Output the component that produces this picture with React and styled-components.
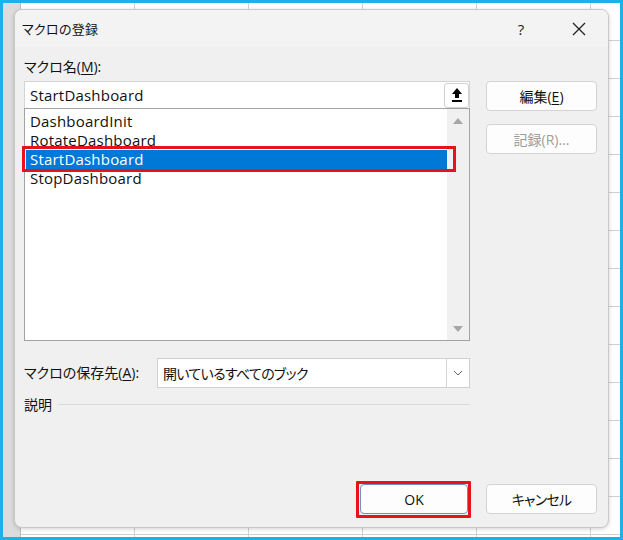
import React from "react";
import styled, { createGlobalStyle } from "styled-components";

const Global = createGlobalStyle`
  html, body { margin: 0; padding: 0; }
  body { width: 623px; height: 540px; overflow: hidden; }
  * { box-sizing: border-box; }
`;

const JP = `"Open Sans", "Noto Sans CJK JP", sans-serif`;

const Frame = styled.div`
  width: 623px;
  height: 540px;
  border: 3px solid #1cb2e6;
  padding: 6px 11px 9px 11px;
  background-color: #ffffff;
  background-image:
    linear-gradient(to right, #dcdcdc 0 17px, #bdbdbd 17px 18px, transparent 18px),
    repeating-linear-gradient(to right, transparent 0 113px, #d2d2d2 113px 114px),
    repeating-linear-gradient(to bottom, transparent 0 37px, #cfcfcf 37px 38px);
  background-position: 0 0, 18px 0, 0 0;
  display: flex;
`;

const Dialog = styled.div`
  flex: 1;
  display: flex;
  flex-direction: column;
  background: #f0f0f0;
  border: 1px solid #c9c9c9;
  border-radius: 8px;
  box-shadow: 0 1px 4px rgba(0, 0, 0, 0.18);
  overflow: hidden;
  font-family: ${JP};
  font-feature-settings: "palt" 1;
  color: #111;
`;

const TitleBar = styled.div`
  height: 37px;
  display: flex;
  align-items: center;
  padding-left: 7px;
  background: #f3f3f3;
  font-size: 13px;
`;

const TitleText = styled.div`
  flex: 1;
  letter-spacing: 0.3px;
`;

const TitleButton = styled.div`
  width: 58px;
  height: 37px;
  display: flex;
  align-items: center;
  justify-content: center;
  font-size: 15px;
  color: #222;
`;

const Body = styled.div`
  flex: 1;
  display: flex;
  flex-direction: column;
  padding: 11px 11px 13px 9px;
`;

const Top = styled.div`
  display: flex;
  gap: 16px;
`;

const LeftCol = styled.div`
  width: 446px;
  display: flex;
  flex-direction: column;
`;

const RightCol = styled.div`
  width: 111px;
  padding-top: 23px;
  display: flex;
  flex-direction: column;
  gap: 13px;
`;

const Label = styled.div`
  font-size: 14px;
  line-height: 18px;
  white-space: nowrap;
  u { text-decoration: underline; text-underline-offset: 2px; }
`;

const NameBox = styled.div`
  margin-top: 5px;
  height: 27px;
  display: flex;
  align-items: center;
  background: #fff;
  border: 1px solid #d4d4d4;
  border-bottom: none;
  padding-left: 5px;
  font-size: 15px;
`;

const NameText = styled.div`
  flex: 1;
  letter-spacing: 0.2px;
`;

const UpButton = styled.div`
  width: 25px;
  height: 25px;
  display: flex;
  align-items: center;
  justify-content: center;
  border: 1px solid #d0d0d0;
  border-radius: 3px;
  background: #fff;
`;

const ListBox = styled.div`
  height: 233px;
  display: flex;
  background: #fff;
  border: 1px solid #a3a3a3;
`;

const Items = styled.div`
  flex: 1;
  padding-top: 3px;
  padding-left: 1px;
`;

const Item = styled.div`
  position: relative;
  height: 19px;
  line-height: 19px;
  padding-left: 4px;
  font-size: 15px;
  letter-spacing: 0.2px;
  background: ${(p) => (p.$selected ? "#0078d7" : "transparent")};
  color: ${(p) => (p.$selected ? "#fff" : "#111")};
`;

const Highlight = styled.div`
  position: absolute;
  left: -4px;
  top: -4px;
  right: -9px;
  bottom: -3px;
  border: 3px solid #e8121a;
  pointer-events: none;
`;

const ScrollBar = styled.div`
  width: 22px;
  background: #f0f0f0;
  display: flex;
  flex-direction: column;
  justify-content: space-between;
  align-items: center;
  padding: 9px 0 8px;
`;

const Arrow = styled.div`
  width: 0;
  height: 0;
  border-left: 5px solid transparent;
  border-right: 5px solid transparent;
  ${(p) =>
    p.$down
      ? "border-top: 6px solid #a6a6a6;"
      : "border-bottom: 6px solid #a6a6a6;"}
`;

const Button = styled.div`
  position: relative;
  height: 30px;
  width: ${(p) => p.$w || 111}px;
  display: flex;
  align-items: center;
  justify-content: center;
  background: #fdfdfd;
  border: 1px solid ${(p) => (p.$default ? "#6f8fc7" : "#d3d3d3")};
  border-radius: 4px;
  font-size: 14px;
  letter-spacing: ${(p) => p.$tight ? "-0.8px" : "0"};
  color: ${(p) => (p.$disabled ? "#9d9d9d" : "#111")};
  u { text-decoration: underline; text-underline-offset: 2px; }
`;

const ButtonMark = styled.div`
  position: absolute;
  left: -5px;
  right: -4px;
  top: -4px;
  bottom: -5px;
  border: 3px solid #e8121a;
  border-radius: 1px;
  pointer-events: none;
`;

const SaveRow = styled.div`
  margin-top: 17px;
  width: 446px;
  display: flex;
  align-items: center;
`;

const SaveLabel = styled(Label)`
  width: 133px;
`;

const Select = styled.div`
  flex: 1;
  height: 30px;
  display: flex;
  align-items: stretch;
  background: #fff;
  border: 1px solid #cfcfcf;
  font-size: 14px;
`;

const SelectText = styled.div`
  flex: 1;
  display: flex;
  align-items: center;
  padding-left: 5px;
  letter-spacing: -0.7px;
`;

const Chevron = styled.div`
  width: 23px;
  border-left: 1px solid #d6d6d6;
  display: flex;
  align-items: center;
  justify-content: center;
`;

const DescRow = styled.div`
  margin-top: 8px;
  width: 446px;
  display: flex;
  align-items: center;
  gap: 6px;
`;

const Rule = styled.div`
  flex: 1;
  height: 1px;
  background: #d9d9d9;
  margin-top: -2px;
`;

const Footer = styled.div`
  margin-top: auto;
  display: flex;
  justify-content: flex-end;
  gap: 18px;
`;

const items = ["DashboardInit", "RotateDashboard", "StartDashboard", "StopDashboard"];

export default function App() {
  return (
    <>
      <Global />
      <Frame>
        <Dialog>
          <TitleBar>
            <TitleText>マクロの登録</TitleText>
            <TitleButton>?</TitleButton>
            <TitleButton>
              <svg width="14" height="14" viewBox="0 0 14 14">
                <path d="M1 1L13 13M13 1L1 13" stroke="#222" strokeWidth="1.3" />
              </svg>
            </TitleButton>
          </TitleBar>
          <Body>
            <Top>
              <LeftCol>
                <Label>
                  マクロ名(<u>M</u>):
                </Label>
                <NameBox>
                  <NameText>StartDashboard</NameText>
                  <UpButton>
                    <svg width="12" height="16" viewBox="0 0 12 16">
                      <path d="M6 1L1 7H4V11H8V7H11Z" fill="#000" />
                      <rect x="1" y="13" width="10" height="2" fill="#000" />
                    </svg>
                  </UpButton>
                </NameBox>
                <ListBox>
                  <Items>
                    {items.map((it) => (
                      <Item key={it} $selected={it === "StartDashboard"}>
                        {it}
                        {it === "StartDashboard" && <Highlight />}
                      </Item>
                    ))}
                  </Items>
                  <ScrollBar>
                    <Arrow />
                    <Arrow $down />
                  </ScrollBar>
                </ListBox>
              </LeftCol>
              <RightCol>
                <Button>
                  編集(<u>E</u>)
                </Button>
                <Button $disabled>記録(R)...</Button>
              </RightCol>
            </Top>
            <SaveRow>
              <SaveLabel>
                マクロの保存先(<u>A</u>):
              </SaveLabel>
              <Select>
                <SelectText>開いているすべてのブック</SelectText>
                <Chevron>
                  <svg width="10" height="6" viewBox="0 0 10 6">
                    <path d="M1 1L5 5L9 1" stroke="#666" strokeWidth="1" fill="none" />
                  </svg>
                </Chevron>
              </Select>
            </SaveRow>
            <DescRow>
              <Label>説明</Label>
              <Rule />
            </DescRow>
            <Footer>
              <Button $w={108} $default>
                OK
                <ButtonMark />
              </Button>
              <Button $tight>キャンセル</Button>
            </Footer>
          </Body>
        </Dialog>
      </Frame>
    </>
  );
}
